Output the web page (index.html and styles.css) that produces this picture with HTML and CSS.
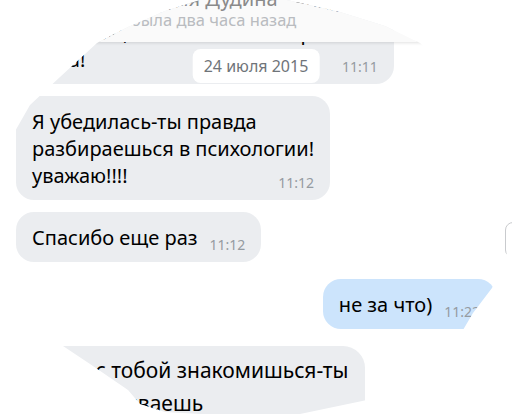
FILE: index.html
```html
<!DOCTYPE html>
<html lang="ru">
<head>
<meta charset="utf-8">
<title>Чат</title>
<link rel="stylesheet" href="styles.css">
</head>
<body>
<div class="screen">
  <div class="chat">
    <div class="msg in">Спасибо тебе огромное, теперь я<br>понимаю, что ты была совершенно<br>Пока!<span class="time">11:11</span></div>
    <div class="msg in">Я убедилась-ты правда<br>разбираешься в психологии!<br>уважаю!!!!<span class="time">11:12</span></div>
    <div class="msg in">Спасибо еще раз<span class="time">11:12</span></div>
    <div class="msg out">не за что)<span class="time">11:22</span></div>
    <div class="msg in near">Когда с тобой знакомишься-ты<br>ты раскрываешь<br>себя с лучшей стороны<span class="time">11:25</span></div>
  </div>
  <header class="head">
    <div class="name">Ксения Дудина</div>
    <div class="status">была два часа назад</div>
  </header>
  <div class="date">24 июля 2015</div>
  <div class="scroll-btn"></div>
</div>
</body>
</html>
```
FILE: styles.css
```css
html, body {
  margin: 0;
  padding: 0;
  background: #ffffff;
}
.screen {
  position: relative;
  width: 512px;
  height: 415px;
  overflow: hidden;
  background: #ffffff;
  font-family: "Noto Sans", "Open Sans", sans-serif;
  clip-path: polygon(200px 0, 287px 0, 340px 12px, 385px 26px, 420px 43px, 463px 83px, 490px 123px, 507px 165px, 512px 200px, 512px 240px, 506px 255px, 492px 288px, 473px 313px, 453px 347px, 430px 372px, 405px 390px, 367px 400px, 300px 414px, 200px 414px, 165px 412px, 140px 404px, 128px 390px, 90px 364px, 57px 342px, 33px 313px, 14px 280px, 3px 245px, 2px 205px, 10px 140px, 30px 105px, 60px 77px, 97px 43px, 128px 27px, 165px 11px);
}
.chat {
  display: flex;
  flex-direction: column;
  align-items: flex-start;
  padding: 0 16px;
  margin-top: -20px;
}
.msg {
  display: flow-root;
  padding: 12px 16px 11px;
  border-radius: 18px;
  font-size: 20px;
  line-height: 27px;
  color: #000000;
  background: #ebedf0;
}
.msg + .msg {
  margin-top: 12px;
}
.msg.out,
.msg.out + .msg {
  margin-top: 17px;
}
.msg.out {
  align-self: flex-end;
  background: #cce4fc;
}
.msg.near {
  padding-top: 8px;
  font-size: 21px;
  line-height: 33px;
  border-radius: 22px;
}
.time {
  float: right;
  margin: 13px 0 -3px 12px;
  font-size: 14px;
  line-height: 16px;
  color: #959ba1;
}
.head {
  position: absolute;
  top: 0;
  left: 0;
  right: 0;
  height: 42px;
  padding-left: 131px;
  background: #fafafa;
  box-shadow: 0 1px 3px rgba(0, 0, 0, 0.12);
}
.name {
  margin-top: -11px;
  font-size: 20px;
  line-height: 20px;
  color: #8a8a8a;
}
.status {
  margin-top: 1px;
  font-size: 16.5px;
  line-height: 20px;
  color: #b9bcc0;
}
.date {
  position: absolute;
  top: 49px;
  left: 50%;
  transform: translateX(-50%);
  height: 34px;
  padding: 0 11px;
  border-radius: 8px;
  background: #ffffff;
  font-size: 16px;
  line-height: 34px;
  color: #6f7479;
  white-space: nowrap;
}
.scroll-btn {
  position: absolute;
  top: 222px;
  left: 505px;
  width: 36px;
  height: 36px;
  box-sizing: border-box;
  border: 1px solid #c9cbce;
  border-radius: 8px;
  background: #ffffff;
}
```
